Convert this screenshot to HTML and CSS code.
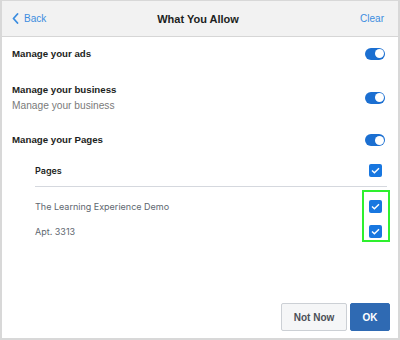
FILE: index.html
```html
<!DOCTYPE html>
<html>
<head>
<meta charset="utf-8">
<link rel="stylesheet" href="styles.css">
</head>
<body>
<div class="frame">
  <div class="header">
    <a class="nav back"><svg class="chev" width="7" height="11" viewBox="0 0 7 11"><path d="M5.5 1 L1.5 5.5 L5.5 10" fill="none" stroke="#3b8de0" stroke-width="1.8" stroke-linecap="round" stroke-linejoin="round"/></svg>Back</a>
    <div class="title">What You Allow</div>
    <a class="nav clear">Clear</a>
  </div>
  <div class="content">
    <div class="row r1">
      <div class="label">Manage your ads</div>
      <span class="toggle"></span>
    </div>
    <div class="row r2">
      <div>
        <div class="label">Manage your business</div>
        <div class="sub">Manage your business</div>
      </div>
      <span class="toggle"></span>
    </div>
    <div class="row r3">
      <div class="label">Manage your Pages</div>
      <span class="toggle"></span>
    </div>
    <div class="pages">
      <div class="prow phead">
        <div class="plabel">Pages</div>
        <span class="check"><svg width="9" height="7" viewBox="0 0 9 7"><path d="M1 3.6 L3.4 5.8 L8 1.2" fill="none" stroke="#fff" stroke-width="1.4"/></svg></span>
      </div>
      <div class="items">
        <div class="prow item">
          <div class="ptext">The Learning Experience Demo</div>
          <span class="check"><svg width="9" height="7" viewBox="0 0 9 7"><path d="M1 3.6 L3.4 5.8 L8 1.2" fill="none" stroke="#fff" stroke-width="1.4"/></svg></span>
        </div>
        <div class="prow item">
          <div class="ptext">Apt. 3313</div>
          <span class="check"><svg width="9" height="7" viewBox="0 0 9 7"><path d="M1 3.6 L3.4 5.8 L8 1.2" fill="none" stroke="#fff" stroke-width="1.4"/></svg></span>
        </div>
        <div class="highlight"></div>
      </div>
    </div>
  </div>
  <div class="footer">
    <button class="btn secondary">Not Now</button>
    <button class="btn primary">OK</button>
  </div>
</div>
</body>
</html>
```
FILE: styles.css
```css
html, body { margin: 0; padding: 0; background: #fff; }
.frame {
  box-sizing: border-box;
  width: 400px;
  height: 340px;
  border: 2px solid #d8d8d8;
  border-top-width: 1px;
  display: flex;
  flex-direction: column;
  font-family: "Liberation Sans", Arial, sans-serif;
  color: #1c1e21;
}
.header {
  height: 35px;
  background: #f2f2f2;
  border-bottom: 1px solid #d6d6d6;
  display: grid;
  grid-template-columns: 1fr auto 1fr;
  align-items: center;
  padding: 0 14px 0 10px;
  flex-shrink: 0;
}
.nav { color: #3b8de0; font-size: 10px; display: flex; align-items: center; }
.clear { justify-self: end; }
.chev { margin-right: 5px; }
.title { font-weight: bold; font-size: 11px; color: #1c1e21; }
.content { flex: 1; padding: 0 11px 0 10px; }
.row { display: flex; align-items: center; justify-content: space-between; padding-right: 2px; }
.r1 { height: 33px; }
.r2 { height: 55px; }
.r3 { height: 30px; }
.label { font-weight: bold; font-size: 9.7px; color: #1c1e21; line-height: 16px; }
.sub { font-size: 10.2px; color: #7a7a7a; line-height: 16px; }
.toggle {
  position: relative;
  width: 20px;
  height: 12px;
  border-radius: 6px;
  background: #1b6fd1;
  display: block;
}
.toggle::after {
  content: "";
  position: absolute;
  right: 1.5px;
  top: 1.5px;
  width: 9px;
  height: 9px;
  border-radius: 50%;
  background: #fff;
}
.pages { padding-left: 23px; }
.prow { display: flex; align-items: center; justify-content: space-between; padding-right: 5px; }
.phead { height: 31px; border-bottom: 1px solid #d5d8de; }
.plabel { font-family: Inter, "Liberation Sans", sans-serif; font-weight: 600; font-size: 9px; color: #1c1e21; }
.items { position: relative; padding-top: 7px; }
.item { height: 25px; }
.ptext { font-family: Inter, "Liberation Sans", sans-serif; font-size: 9px; color: #606770; }
.check {
  width: 13px;
  height: 13px;
  border-radius: 2px;
  background: #1877e0;
  display: flex;
  align-items: center;
  justify-content: center;
}
.highlight {
  position: absolute;
  right: -3px;
  top: 3px;
  width: 24px;
  height: 48px;
  border: 2px solid #2ef02e;
}
.footer {
  display: flex;
  justify-content: flex-end;
  gap: 3px;
  padding: 0 8px 7px 0;
}
.btn {
  height: 28px;
  border-radius: 2px;
  font-family: "Liberation Sans", Arial, sans-serif;
  font-weight: bold;
  font-size: 10px;
  padding: 0;
}
.secondary {
  width: 66px;
  background: #f5f6f7;
  border: 1px solid #ccd0d5;
  color: #4b4f56;
}
.primary {
  width: 40px;
  background: #2f6ab3;
  border: 1px solid #2f6ab3;
  color: #fff;
}
```
